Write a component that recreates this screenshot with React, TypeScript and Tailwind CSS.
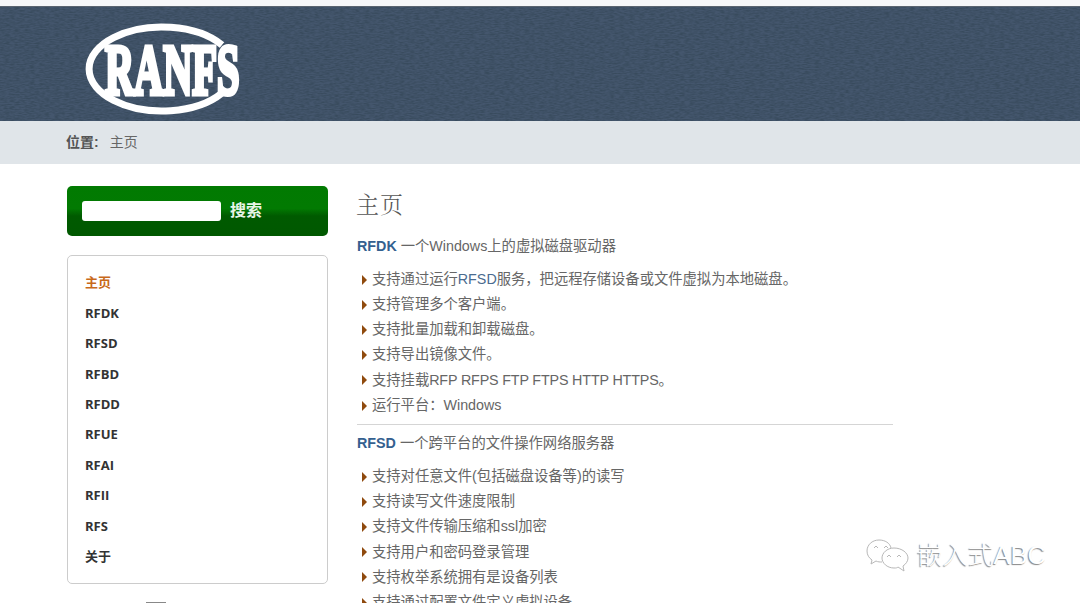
const navItems = ["主页", "RFDK", "RFSD", "RFBD", "RFDD", "RFUE", "RFAI", "RFII", "RFS", "关于"];

const rfdkItems = [
  <>支持通过运行<span className="text-[#4a6b8f]">RFSD</span>服务，把远程存储设备或文件虚拟为本地磁盘。</>,
  "支持管理多个客户端。",
  "支持批量加载和卸载磁盘。",
  "支持导出镜像文件。",
  <>支持挂载<span className="tracking-[-0.15px]">RFP RFPS FTP FTPS HTTP HTTPS</span>。</>,
  "运行平台：Windows",
];

const rfsdItems = [
  "支持对任意文件(包括磁盘设备等)的读写",
  "支持读写文件速度限制",
  "支持文件传输压缩和ssl加密",
  "支持用户和密码登录管理",
  "支持枚举系统拥有是设备列表",
  "支持通过配置文件定义虚拟设备",
];

function Logo() {
  return (
    <svg width="156" height="92" viewBox="0 0 156 92" className="relative">
      <path d="M138 22A73 42 0 1 0 138 70" fill="none" stroke="#fff" strokeWidth="7" />
      <text
        transform="translate(21 71) scale(0.56 1)"
        fill="#fff"
        stroke="#fff"
        strokeWidth="5"
        fontSize="72"
        fontWeight="700"
        fontFamily="'Liberation Serif', serif"
      >
        RANFS
      </text>
    </svg>
  );
}

function Texture() {
  return (
    <svg className="absolute inset-0 h-full w-full" aria-hidden="true">
      <filter id="leather">
        <feTurbulence type="fractalNoise" baseFrequency="0.2 0.8" numOctaves="2" seed="4" />
        <feColorMatrix values="0 0 0 0 0.04  0 0 0 0 0.07  0 0 0 0 0.11  2.2 0 0 0 -0.7" />
      </filter>
      <rect width="100%" height="100%" filter="url(#leather)" />
    </svg>
  );
}

function Bullets({ items }: { items: React.ReactNode[] }) {
  return (
    <ul className="mt-[11px]">
      {items.map((item, i) => (
        <li key={i} className="flex h-[25.2px] items-center text-[14.3px]">
          <span className="ml-[5px] mr-[5px] h-0 w-0 border-y-[5px] border-l-[5px] border-y-transparent border-l-[#8f4a0e]" />
          <span>{item}</span>
        </li>
      ))}
    </ul>
  );
}

export default function App() {
  return (
    <div className="relative h-[603px] w-[1080px] overflow-hidden bg-white font-['Liberation_Sans','Noto_Sans_CJK_SC',sans-serif] text-[#666] [text-spacing-trim:space-all]">
      <div className="h-[6px] bg-[#f6f7f9]" />
      <header className="relative flex h-[115px] items-center border-t border-[#5a6470] bg-[#44566d] pl-[84px] pt-[10px]">
        <Texture />
        <Logo />
      </header>
      <div className="flex h-[43px] items-center gap-[11px] bg-[#e0e5e9] pl-[66px] text-[14px]">
        <span className="font-bold text-[#555]">位置:</span>
        <span>主页</span>
      </div>

      <div className="flex gap-[29px] pl-[67px] pt-[22px]">
        <aside className="w-[261px] shrink-0">
          <div className="flex h-[50px] items-center gap-[9px] rounded-[5px] bg-[linear-gradient(#017a01_0%,#027a02_45%,#005a00_60%,#005800_100%)] pb-[1px] pl-[15px]">
            <div className="h-[20px] w-[139px] rounded-[3px] bg-white" />
            <span className="text-[16px] font-bold text-[#e8f5e8]">搜索</span>
          </div>
          <nav className="mt-[19px] h-[329px] rounded-[5px] border border-[#ccc] pl-[17px] pt-[12px] font-['Open_Sans','Noto_Sans_CJK_SC',sans-serif] text-[13px] font-bold text-[#333]">
            {navItems.map((name, i) => (
              <div key={name} className={`flex h-[30.4px] items-center ${i === 0 ? "text-[#c8691a]" : ""}`}>
                {name}
              </div>
            ))}
          </nav>
          <div className="ml-[79px] mt-[18px] h-[2px] w-[20px] bg-[#888]" />
        </aside>

        <main className="w-[536px]">
          <h1 className="-ml-[1px] pt-[1px] font-['Liberation_Serif','Noto_Serif_CJK_SC','Noto_Sans_CJK_SC',serif] text-[23px] font-light leading-[38px] tracking-[1px] text-[#555]">
            主页
          </h1>
          <p className="mt-[11px] text-[14.3px] leading-[20px]">
            <span className="font-bold text-[#34608f]">RFDK</span> 一个Windows上的虚拟磁盘驱动器
          </p>
          <Bullets items={rfdkItems} />
          <hr className="mt-[6px] border-[#d5d5d5]" />
          <p className="mt-[8px] text-[14.3px] leading-[20px]">
            <span className="font-bold text-[#34608f]">RFSD</span> 一个跨平台的文件操作网络服务器
          </p>
          <Bullets items={rfsdItems} />
        </main>
      </div>

      {/* watermark */}
      <div className="absolute left-[866px] top-[538px] flex items-center gap-[7px]">
        <svg width="44" height="36" viewBox="0 0 44 36" fill="none" stroke="#b8b8b8" strokeWidth="1">
          <path d="M13 2C6 2 1 7 1 13c0 4 2 7 5 9l-1 4 5-3c2 1 4 1 6 1" />
          <path d="M13 2c6 0 11 3 12 8" />
          <path d="M28 10c-7 0-12 5-12 10s5 10 12 10c2 0 3 0 4-1l6 4-1-5c3-2 5-5 5-8 0-5-6-10-14-10z" />
          <path d="M8 10l2-2 2 2M18 10l2-2 2 2M21 19l2-2 2 2M31 19l2-2 2 2" />
        </svg>
        <span className="text-[25.5px] font-light leading-none text-white [text-shadow:-1px_1px_1px_#888]">嵌入式ABC</span>
      </div>
    </div>
  );
}
